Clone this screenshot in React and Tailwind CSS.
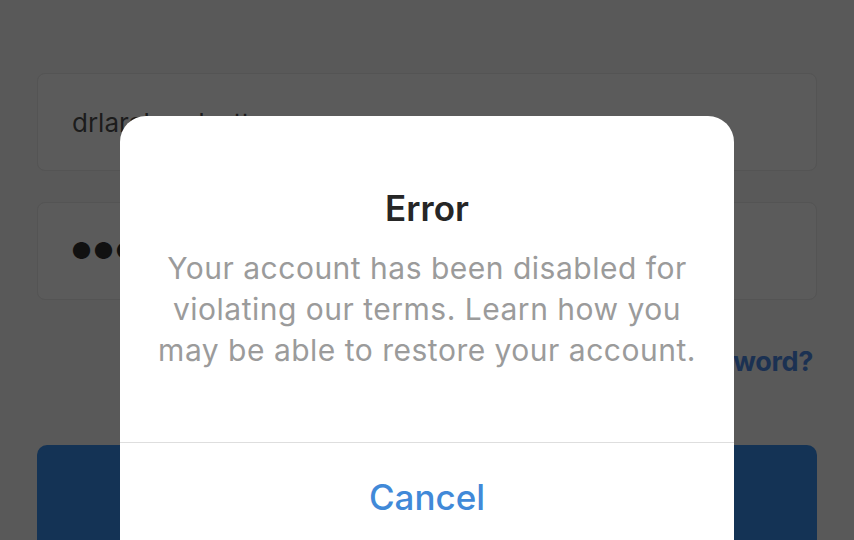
import React from "react";

// Dimmed login screen with an iOS-style alert on top
const FONT = { fontFamily: "Inter, 'Liberation Sans', sans-serif" };

function LoginBehind() {
  return (
    <div className="flex flex-col px-[37px] pt-[73px]">
      <div className="h-[98px] rounded-[8px] border border-[#545454] bg-[#5b5b5b] flex items-center pl-[34px]">
        <span className="text-[26px] text-[#1c1c1c] whitespace-nowrap">drlarahandsetter</span>
      </div>
      <div className="mt-[31px] h-[98px] rounded-[8px] border border-[#545454] bg-[#5b5b5b] flex items-center pl-[33px]">
        <span className="text-[23px] tracking-[1px] text-[#111]">●●●●●●●●●●</span>
      </div>
      <div className="mt-[42px] flex justify-end pr-[4px]">
        <span className="text-[27px] font-bold tracking-[-0.3px] text-[#1b3152]">Forgot password?</span>
      </div>
      <div className="mt-[62px] h-[120px] rounded-[10px] bg-[#143355]" />
    </div>
  );
}

function ErrorAlert() {
  return (
    <div className="absolute left-[120px] top-[116px] w-[614px] h-[460px] rounded-t-[26px] bg-white flex flex-col">
      <div className="h-[326px] flex flex-col items-center pt-[70px]">
        <h2 className="text-[35px] leading-[44px] font-semibold text-[#262626]">Error</h2>
        <p className="mt-[18px] text-[30px] leading-[41px] tracking-[0.5px] text-[#9b9b9b] text-center">
          <span className="block">Your account has been disabled for</span>
          <span className="block">violating our terms. Learn how you</span>
          <span className="block">may be able to restore your account.</span>
        </p>
      </div>
      <div className="h-px bg-[#dedede]" />
      <button className="h-[108px] flex justify-center pt-[32px] text-[35px] leading-[44px] font-medium text-[#4189d8]">
        Cancel
      </button>
    </div>
  );
}

export default function App() {
  return (
    <div className="relative w-[854px] h-[540px] overflow-hidden bg-[#595959]" style={FONT}>
      <LoginBehind />
      <ErrorAlert />
    </div>
  );
}
